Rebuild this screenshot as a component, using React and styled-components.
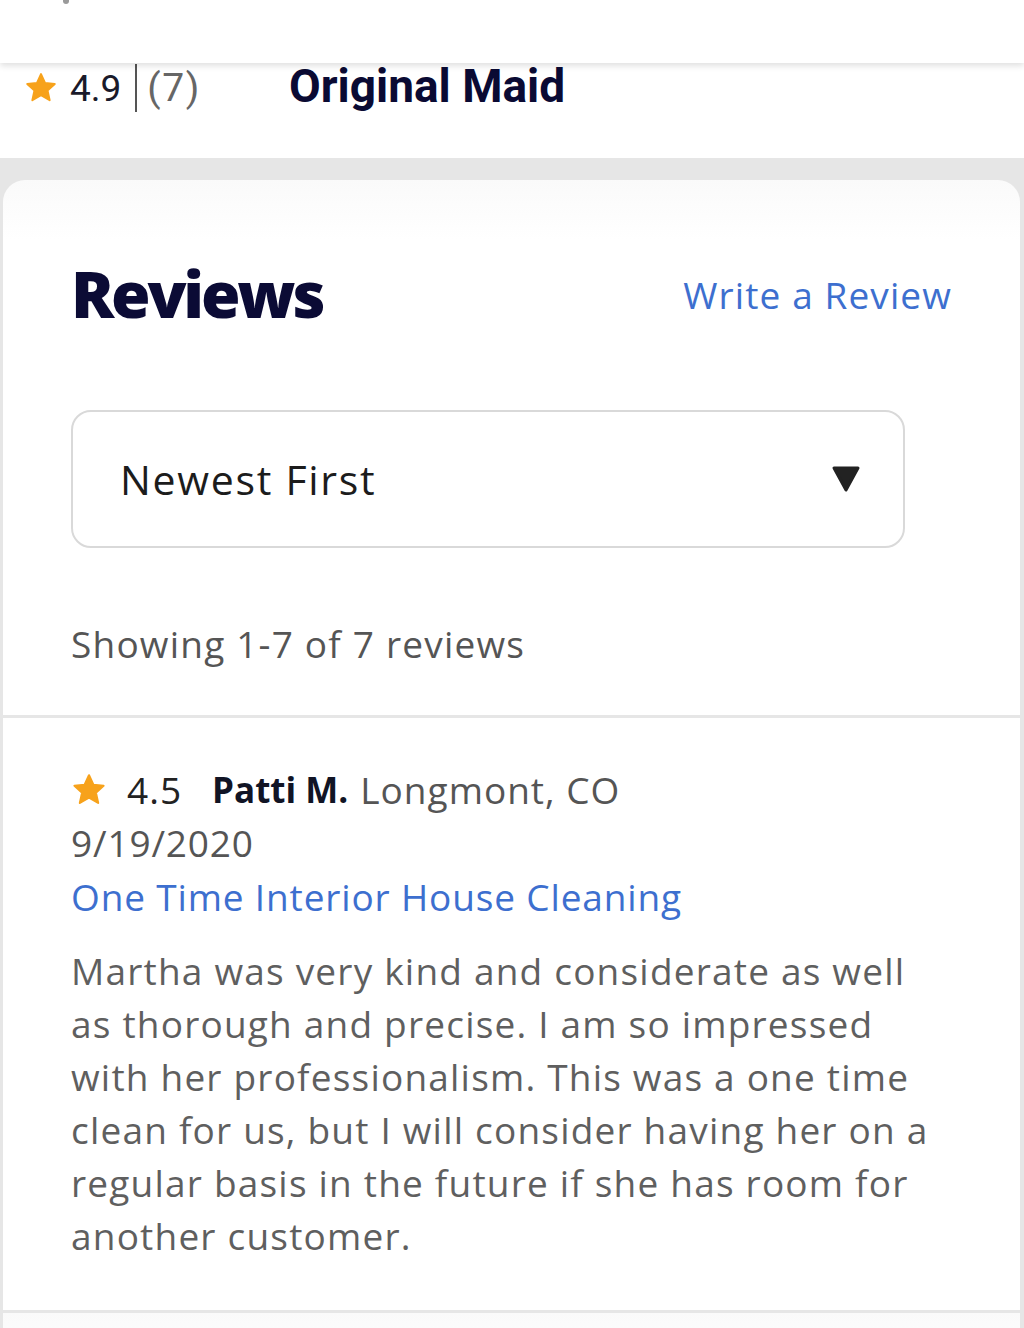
import React from 'react'
import styled, { createGlobalStyle } from 'styled-components'

const GlobalStyle = createGlobalStyle`
  html, body {
    margin: 0;
    padding: 0;
    background: #e4e4e4;
  }
  body {
    font-family: "Open Sans", Lato, sans-serif;
  }
`

const review = {
  rating: '4.5',
  name: 'Patti M.',
  place: 'Longmont, CO',
  date: '9/19/2020',
  service: 'One Time Interior House Cleaning',
  text: 'Martha was very kind and considerate as well as thorough and precise. I am so impressed with her professionalism. This was a one time clean for us, but I will consider having her on a regular basis in the future if she has room for another customer.',
}

const Star = ({ size = 32 }) => (
  <svg width={size} height={size} viewBox="0 0 24 24">
    <path
      d="M12 2.2l2.9 6.3 6.8.7-5.1 4.6 1.5 6.8L12 17.1l-6.1 3.5 1.5-6.8-5.1-4.6 6.8-.7z"
      fill="#f7a21b"
      stroke="#f7a21b"
      strokeWidth="1.4"
      strokeLinejoin="round"
    />
  </svg>
)

const App = () => {
  return (
    <>
      <GlobalStyle />
      <Page>
        <TopBar>
          <BackMark />
        </TopBar>
        <ProHeader>
          <Rating>
            <Star size={34} />
            <span>4.9</span>
            <Pipe />
            <Count>(7)</Count>
          </Rating>
          <ProName>Original Maid</ProName>
        </ProHeader>
        <Card>
          <Section>
            <TitleRow>
              <Title>Reviews</Title>
              <WriteLink>Write a Review</WriteLink>
            </TitleRow>
            <Select>
              <span>Newest First</span>
              <svg width="30" height="28" viewBox="0 0 30 28">
                <path d="M3 3h24L15 25z" fill="#222" stroke="#222" strokeWidth="3" strokeLinejoin="round" />
              </svg>
            </Select>
            <Showing>Showing 1-7 of 7 reviews</Showing>
          </Section>
          <Section $review>
            <ReviewHead>
              <Star size={36} />
              <Score>{review.rating}</Score>
              <Name>{review.name}</Name>
              <Place>{review.place}</Place>
            </ReviewHead>
            <TextLine>{review.date}</TextLine>
            <TextLine $link>{review.service}</TextLine>
            <Body>{review.text}</Body>
          </Section>
          <Section $stub />
        </Card>
      </Page>
    </>
  )
}

const Page = styled.div`
  width: 1024px;
  height: 1328px;
  overflow: hidden;
  display: flex;
  flex-direction: column;
  background: linear-gradient(#d9d9d9, #e6e6e6 40px);
`

const TopBar = styled.div`
  height: 63px;
  background: #fff;
  position: relative;
  z-index: 2;
  box-shadow: 0 3px 6px rgba(0, 0, 0, 0.12);
`

const BackMark = styled.div`
  position: absolute;
  left: 63px;
  top: -4px;
  width: 6px;
  height: 8px;
  border-radius: 3px;
  background: #9a9a9a;
`

const ProHeader = styled.div`
  height: 95px;
  background: #fff;
  display: flex;
  align-items: flex-start;
  padding-left: 24px;
  gap: 88px;
  margin-bottom: 22px;
  box-sizing: border-box;
`

const Rating = styled.div`
  display: flex;
  align-items: center;
  height: 50px;
  font-family: Roboto, "Noto Sans", sans-serif;
  font-size: 37px;
  color: #1a1a2a;
  gap: 4px;

  svg {
    margin-right: 8px;
  }
`

const Pipe = styled.div`
  width: 2px;
  height: 48px;
  background: #555;
  margin: 0 6px 0 10px;
`

const Count = styled.span`
  color: #666;
  font-size: 39px;
  letter-spacing: 1.6px;
`

const ProName = styled.div`
  font-family: Roboto, "Noto Sans", sans-serif;
  font-weight: 700;
  font-size: 46px;
  line-height: 46px;
  color: #0a0a33;
`

const Card = styled.div`
  flex: 1;
  margin: 0 4px 0 3px;
  border-radius: 22px 22px 0 0;
  display: flex;
  flex-direction: column;
  gap: 3px;
  overflow: hidden;
`

const Section = styled.div`
  padding: ${(p) => (p.$review ? '46px 68px 48px' : '74px 68px 46px')};
  flex: ${(p) => (p.$stub ? 1 : 'none')};
  background: ${(p) => (p.$review ? '#fff' : 'linear-gradient(#fafafa, #fff 60px)')};
`

const TitleRow = styled.div`
  display: flex;
  justify-content: space-between;
  align-items: center;
`

const Title = styled.h1`
  margin: 0;
  font-size: 64px;
  font-weight: 800;
  color: #0b0b35;
  letter-spacing: -3.2px;
  line-height: 80px;
`

const WriteLink = styled.a`
  font-size: 37px;
  letter-spacing: 1.1px;
  color: #3d6fcf;
  cursor: pointer;
`

const Select = styled.div`
  margin-top: 76px;
  width: 834px;
  height: 138px;
  box-sizing: border-box;
  border: 2px solid #d9d9d9;
  border-radius: 20px;
  display: flex;
  align-items: center;
  justify-content: space-between;
  padding: 0 42px 0 47px;
  font-size: 41px;
  letter-spacing: 1.7px;
  color: #1c1c1c;
`

const Showing = styled.div`
  margin-top: 70px;
  font-size: 37px;
  letter-spacing: 1.2px;
  color: #555;
`

const ReviewHead = styled.div`
  display: flex;
  align-items: center;
  font-size: 37px;
  line-height: 52px;

  svg {
    margin-right: 20px;
  }
`

const Score = styled.span`
  color: #222;
  letter-spacing: 1px;
  margin-right: 30px;
`

const Name = styled.span`
  font-weight: 700;
  font-size: 35px;
  color: #111425;
  margin-right: 12px;
`

const Place = styled.span`
  color: #555;
  letter-spacing: 1px;
`

const TextLine = styled.div`
  font-size: 37px;
  letter-spacing: 0.85px;
  line-height: 54px;
  color: ${(p) => (p.$link ? '#3d6fcf' : '#555')};
`

const Body = styled.p`
  margin: 20px 0 0;
  font-size: 37px;
  letter-spacing: 1.2px;
  line-height: 53px;
  color: #5f5f5f;
  width: 870px;
`

export default App
